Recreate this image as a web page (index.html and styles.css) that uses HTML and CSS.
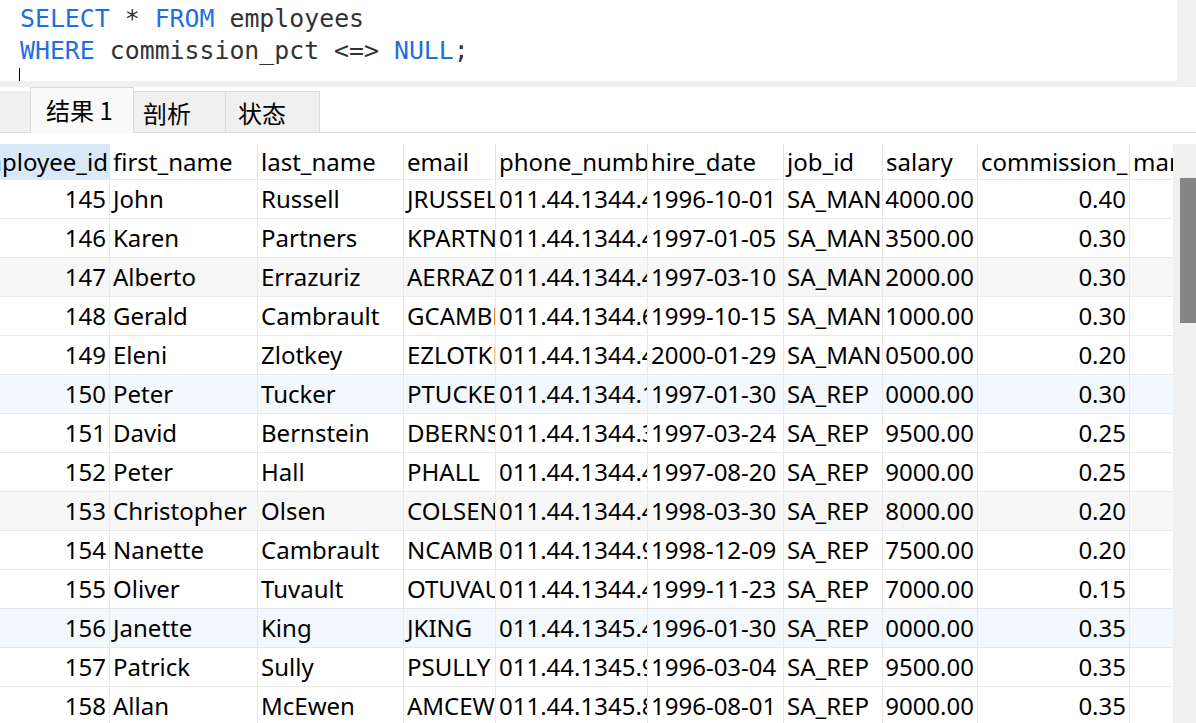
FILE: index.html
```html
<!DOCTYPE html>
<html>
<head>
<meta charset="utf-8">
<link rel="stylesheet" href="styles.css">
</head>
<body>
<div class="editor">
  <div class="code">
    <div class="line"><span class="kw">SELECT</span> * <span class="kw">FROM</span> employees</div>
    <div class="line"><span class="kw">WHERE</span> commission_pct &lt;=&gt; <span class="kw">NULL</span>;</div>
    <div class="caret"></div>
  </div>
  <div class="editor-side"></div>
</div>
<div class="splitter"></div>
<div class="tabs">
  <div class="tab-lead"></div>
  <div class="tab active">结果 1</div>
  <div class="tab">剖析</div>
  <div class="tab">状态</div>
</div>
<div class="results">
  <div class="grid-wrap">
    <div class="grid">
      <div class="row head">
        <div class="c sel">employee_id</div><div class="c">first_name</div><div class="c">last_name</div><div class="c">email</div><div class="c">phone_number</div><div class="c">hire_date</div><div class="c">job_id</div><div class="c">salary</div><div class="c">commission_pct</div><div class="c mgr">manager_id</div>
      </div>
      <div class="row">
        <div class="c n"><span>145</span></div><div class="c">John</div><div class="c">Russell</div><div class="c">JRUSSEL</div><div class="c">011.44.1344.429268</div><div class="c">1996-10-01</div><div class="c">SA_MAN</div><div class="c n"><span>14000.00</span></div><div class="c n"><span>0.40</span></div><div class="c n"><span>100</span></div>
      </div>
      <div class="row">
        <div class="c n"><span>146</span></div><div class="c">Karen</div><div class="c">Partners</div><div class="c">KPARTNER</div><div class="c">011.44.1344.467268</div><div class="c">1997-01-05</div><div class="c">SA_MAN</div><div class="c n"><span>13500.00</span></div><div class="c n"><span>0.30</span></div><div class="c n"><span>100</span></div>
      </div>
      <div class="row gray">
        <div class="c n"><span>147</span></div><div class="c">Alberto</div><div class="c">Errazuriz</div><div class="c">AERRAZUR</div><div class="c">011.44.1344.429278</div><div class="c">1997-03-10</div><div class="c">SA_MAN</div><div class="c n"><span>12000.00</span></div><div class="c n"><span>0.30</span></div><div class="c n"><span>100</span></div>
      </div>
      <div class="row">
        <div class="c n"><span>148</span></div><div class="c">Gerald</div><div class="c">Cambrault</div><div class="c">GCAMBRAU</div><div class="c">011.44.1344.619268</div><div class="c">1999-10-15</div><div class="c">SA_MAN</div><div class="c n"><span>11000.00</span></div><div class="c n"><span>0.30</span></div><div class="c n"><span>100</span></div>
      </div>
      <div class="row">
        <div class="c n"><span>149</span></div><div class="c">Eleni</div><div class="c">Zlotkey</div><div class="c">EZLOTKEY</div><div class="c">011.44.1344.429018</div><div class="c">2000-01-29</div><div class="c">SA_MAN</div><div class="c n"><span>10500.00</span></div><div class="c n"><span>0.20</span></div><div class="c n"><span>100</span></div>
      </div>
      <div class="row blue">
        <div class="c n"><span>150</span></div><div class="c">Peter</div><div class="c">Tucker</div><div class="c">PTUCKER</div><div class="c">011.44.1344.129268</div><div class="c">1997-01-30</div><div class="c">SA_REP</div><div class="c n"><span>10000.00</span></div><div class="c n"><span>0.30</span></div><div class="c n"><span>145</span></div>
      </div>
      <div class="row">
        <div class="c n"><span>151</span></div><div class="c">David</div><div class="c">Bernstein</div><div class="c">DBERNSTE</div><div class="c">011.44.1344.345268</div><div class="c">1997-03-24</div><div class="c">SA_REP</div><div class="c n"><span>9500.00</span></div><div class="c n"><span>0.25</span></div><div class="c n"><span>145</span></div>
      </div>
      <div class="row">
        <div class="c n"><span>152</span></div><div class="c">Peter</div><div class="c">Hall</div><div class="c">PHALL</div><div class="c">011.44.1344.478968</div><div class="c">1997-08-20</div><div class="c">SA_REP</div><div class="c n"><span>9000.00</span></div><div class="c n"><span>0.25</span></div><div class="c n"><span>145</span></div>
      </div>
      <div class="row gray">
        <div class="c n"><span>153</span></div><div class="c">Christopher</div><div class="c">Olsen</div><div class="c">COLSEN</div><div class="c">011.44.1344.498718</div><div class="c">1998-03-30</div><div class="c">SA_REP</div><div class="c n"><span>8000.00</span></div><div class="c n"><span>0.20</span></div><div class="c n"><span>145</span></div>
      </div>
      <div class="row">
        <div class="c n"><span>154</span></div><div class="c">Nanette</div><div class="c">Cambrault</div><div class="c">NCAMBRAU</div><div class="c">011.44.1344.987668</div><div class="c">1998-12-09</div><div class="c">SA_REP</div><div class="c n"><span>7500.00</span></div><div class="c n"><span>0.20</span></div><div class="c n"><span>145</span></div>
      </div>
      <div class="row">
        <div class="c n"><span>155</span></div><div class="c">Oliver</div><div class="c">Tuvault</div><div class="c">OTUVAULT</div><div class="c">011.44.1344.486508</div><div class="c">1999-11-23</div><div class="c">SA_REP</div><div class="c n"><span>7000.00</span></div><div class="c n"><span>0.15</span></div><div class="c n"><span>145</span></div>
      </div>
      <div class="row blue">
        <div class="c n"><span>156</span></div><div class="c">Janette</div><div class="c">King</div><div class="c">JKING</div><div class="c">011.44.1345.429268</div><div class="c">1996-01-30</div><div class="c">SA_REP</div><div class="c n"><span>10000.00</span></div><div class="c n"><span>0.35</span></div><div class="c n"><span>146</span></div>
      </div>
      <div class="row">
        <div class="c n"><span>157</span></div><div class="c">Patrick</div><div class="c">Sully</div><div class="c">PSULLY</div><div class="c">011.44.1345.929268</div><div class="c">1996-03-04</div><div class="c">SA_REP</div><div class="c n"><span>9500.00</span></div><div class="c n"><span>0.35</span></div><div class="c n"><span>146</span></div>
      </div>
      <div class="row">
        <div class="c n"><span>158</span></div><div class="c">Allan</div><div class="c">McEwen</div><div class="c">AMCEWEN</div><div class="c">011.44.1345.829268</div><div class="c">1996-08-01</div><div class="c">SA_REP</div><div class="c n"><span>9000.00</span></div><div class="c n"><span>0.35</span></div><div class="c n"><span>146</span></div>
      </div>
    </div>
  </div>
  <div class="vscroll"><div class="thumb"></div></div>
</div>
</body>
</html>
```
FILE: styles.css
```css
html, body {
  margin: 0;
  padding: 0;
  background: #ffffff;
  height: 723px;
  overflow: hidden;
}
body {
  font-family: "Noto Sans", "Noto Sans CJK SC", sans-serif;
  color: #000;
}
.editor {
  display: flex;
  height: 81px;
}
.code {
  flex: 1;
  background: #fff;
  padding: 3px 0 0 20px;
  font-family: "DejaVu Sans Mono", monospace;
  font-size: 24.85px;
  color: #333333;
  overflow: hidden;
}
.line {
  height: 32px;
  line-height: 32px;
  white-space: pre;
}
.kw { color: #1f6fe0; }
.caret {
  width: 1px;
  height: 13px;
  background: #000;
  margin: 1px 0 0 -1px;
}
.editor-side {
  width: 19px;
  background: #f0f0f0;
}
.splitter {
  height: 6px;
  background: #f0f0f0;
}
.tabs {
  display: flex;
  align-items: flex-end;
  height: 45px;
  border-bottom: 1px solid #dcdcdc;
  font-family: "Noto Sans CJK SC", sans-serif;
  font-size: 24px;
}
.tab-lead {
  width: 30px;
  height: 41px;
  background: #f0f0f0;
}
.tab {
  height: 41px;
  line-height: 41px;
  background: #f0f0f0;
  border-top: 1px solid #dcdcdc;
  border-right: 1px solid #dcdcdc;
  box-sizing: border-box;
  padding: 0 10px 0 12px;
  width: 94px;
}
.tab.active {
  height: 46px;
  line-height: 44px;
  background: #fafafa;
  border-left: 1px solid #dcdcdc;
  width: 104px;
  padding-left: 15px;
  margin-bottom: -1px;
}
.tab.active + .tab { width: 92px; padding-left: 9px; }
.results {
  display: flex;
  margin-top: 11px;
  height: 579px;
}
.grid-wrap {
  flex: 1;
  overflow: hidden;
}
.grid {
  display: grid;
  grid-template-columns: 147px 148px 146px 92px 152px 136px 99px 95px 152px 150px;
  margin-left: -37px;
  font-size: 24px;
}
.row { display: contents; }
.c {
  height: 39px;
  line-height: 37px;
  box-sizing: border-box;
  padding: 0 3px;
  border-right: 1px solid #e8e8e8;
  border-bottom: 1px solid #e8e8e8;
  white-space: nowrap;
  overflow: hidden;
}
.head .c {
  height: 36px;
  line-height: 35px;
  border-right-color: #e3e3e3;
}
.head .c.sel { background: #d9e9f7; }
.c.n {
  display: flex;
  justify-content: flex-end;
}
.c.n span { flex-shrink: 0; }
.row.gray .c { background: #f7f7f7; }
.row.blue .c { background: #f3f8fd; }
.vscroll {
  width: 23px;
  background: #f0f0f0;
  padding: 34px 0 0 7px;
  box-sizing: border-box;
}
.thumb {
  height: 145px;
  background: #858585;
}
```
